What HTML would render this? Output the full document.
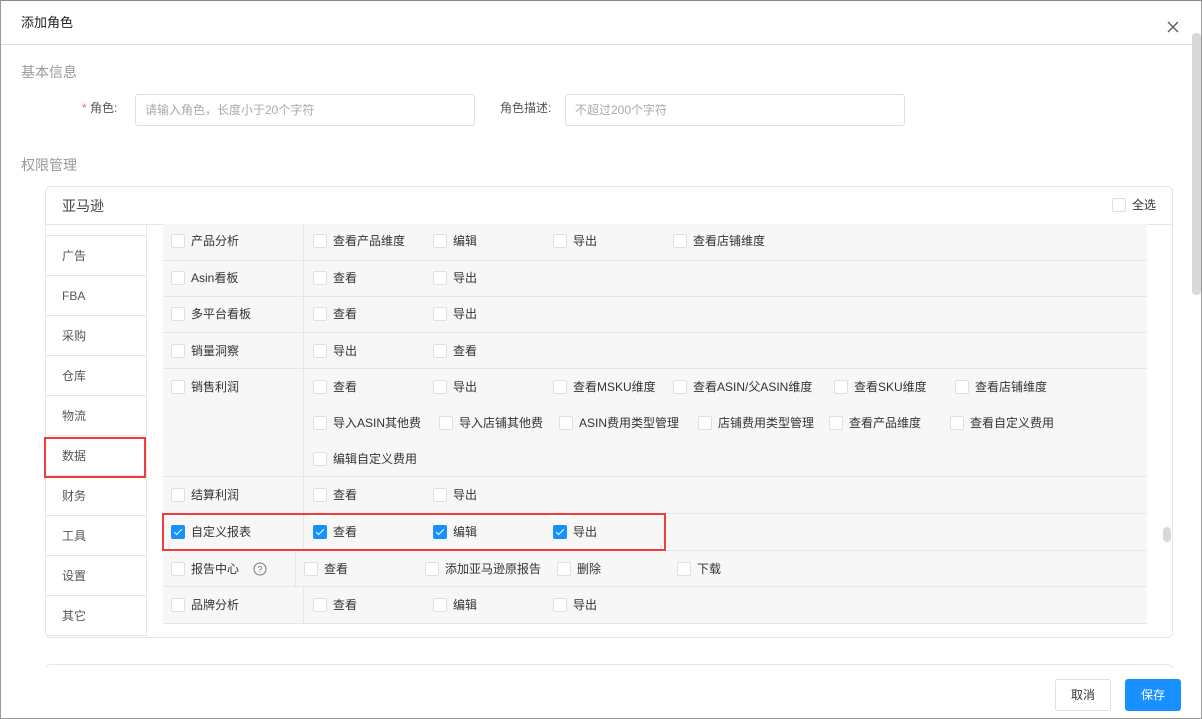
<!DOCTYPE html><html><head><meta charset="utf-8"><style>
*{box-sizing:border-box;margin:0;padding:0}
body{width:1202px;height:719px;overflow:hidden;background:#fff;font-family:"Liberation Sans","Noto Sans CJK SC",sans-serif;position:relative;color:#333}
.a{position:absolute}
.frame{position:absolute;left:0;top:0;width:1202px;height:719px;border:1px solid #9a9a9a;border-top:1px solid #8a8a8a}
.t{position:absolute;font-size:12px;line-height:14px;color:#333;white-space:nowrap}
.c{position:absolute;font-size:12px;line-height:14px;color:#333;white-space:nowrap}
.c i{display:inline-block;width:14px;height:14px;border:1px solid #dcdfe6;background:#fff;border-radius:2px;vertical-align:-3px;margin-right:6px;position:relative}
.c i.on{background:#1890ff;border-color:#1890ff}
.c i.on:after{content:"";position:absolute;left:4px;top:1px;width:3px;height:7px;border:solid #fff;border-width:0 1px 1px 0;transform:rotate(45deg)}
.row{position:absolute;left:163px;width:984px;border-bottom:1px solid #e6e6e6;background:#f7f7f7}
.m{position:absolute;left:46px;width:100px;height:40px;border-bottom:1px solid #e6e6e6;font-size:12px;color:#555;line-height:40px;padding-left:16px}
</style></head><body>
<div class="frame"></div>
<div class="t" style="left:21px;top:16px;font-size:13px;color:#222">添加角色</div>
<svg class="a" style="left:1166px;top:20px" width="14" height="14"><path d="M2 2L12 12M12 2L2 12" stroke="#555" stroke-width="1.3"/></svg>
<div class="a" style="left:1px;top:44px;width:1200px;height:1px;background:#dedede"></div>
<div class="a" style="left:1192px;top:33px;width:9px;height:262px;background:#d9d9d9;border-radius:4px"></div>
<div class="t" style="left:21px;top:64px;font-size:14px;color:#999;line-height:16px">基本信息</div>
<div class="t" style="left:82px;top:101px;color:#555"><span style="color:#f56c6c">*</span> 角色:</div>
<div class="a" style="left:135px;top:94px;width:340px;height:32px;border:1px solid #dcdfe6;border-radius:3px"></div>
<div class="t" style="left:145px;top:103px;color:#aaa">请输入角色，长度小于20个字符</div>
<div class="t" style="left:500px;top:101px;color:#555">角色描述:</div>
<div class="a" style="left:565px;top:94px;width:340px;height:32px;border:1px solid #dcdfe6;border-radius:3px"></div>
<div class="t" style="left:575px;top:103px;color:#aaa">不超过200个字符</div>
<div class="t" style="left:21px;top:157px;font-size:14px;color:#999;line-height:16px">权限管理</div>
<div class="a" style="left:45px;top:186px;width:1128px;height:452px;border:1px solid #e6e6e6;border-radius:6px"></div>
<div class="t" style="left:62px;top:198px;font-size:14px;line-height:16px;color:#444">亚马逊</div>
<div class="c" style="left:1112px;top:198px"><i></i>全选</div>
<div class="a" style="left:46px;top:224px;width:1126px;height:1px;background:#e6e6e6"></div>
<div class="a" style="left:146px;top:225px;width:1px;height:412px;background:#e6e6e6"></div>
<div class="a" style="left:46px;top:235px;width:100px;height:1px;background:#e6e6e6"></div>
<div class="m" style="top:236px">广告</div><div class="m" style="top:276px">FBA</div><div class="m" style="top:316px">采购</div><div class="m" style="top:356px">仓库</div><div class="m" style="top:396px">物流</div><div class="m" style="top:436px">数据</div><div class="m" style="top:476px">财务</div><div class="m" style="top:516px">工具</div><div class="m" style="top:556px">设置</div><div class="m" style="top:596px">其它</div>
<div class="a" style="left:44px;top:437px;width:102px;height:41px;border:2px solid #f03c3c"></div>
<div class="row" style="top:224px;height:37px"></div>
<div class="row" style="top:261px;height:36px"></div>
<div class="row" style="top:297px;height:36px"></div>
<div class="row" style="top:333px;height:36px"></div>
<div class="row" style="top:369px;height:108px"></div>
<div class="row" style="top:477px;height:37px"></div>
<div class="row" style="top:514px;height:37px"></div>
<div class="row" style="top:551px;height:36px"></div>
<div class="row" style="top:587px;height:37px"></div>
<div class="a" style="left:303px;top:224px;width:1px;height:327px;background:#e6e6e6"></div>
<div class="a" style="left:295px;top:551px;width:1px;height:36px;background:#e6e6e6"></div>
<div class="a" style="left:303px;top:587px;width:1px;height:37px;background:#e6e6e6"></div>
<div class="a" style="left:1163px;top:527px;width:8px;height:15px;background:#d9d9d9;border-radius:4px"></div>
<div class="c" style="left:171px;top:234px"><i></i>产品分析</div>
<div class="c" style="left:313px;top:234px"><i></i>查看产品维度</div><div class="c" style="left:433px;top:234px"><i></i>编辑</div><div class="c" style="left:553px;top:234px"><i></i>导出</div><div class="c" style="left:673px;top:234px"><i></i>查看店铺维度</div>
<div class="c" style="left:171px;top:271px"><i></i>Asin看板</div><div class="c" style="left:313px;top:271px"><i></i>查看</div><div class="c" style="left:433px;top:271px"><i></i>导出</div>
<div class="c" style="left:171px;top:307px"><i></i>多平台看板</div><div class="c" style="left:313px;top:307px"><i></i>查看</div><div class="c" style="left:433px;top:307px"><i></i>导出</div>
<div class="c" style="left:171px;top:344px"><i></i>销量洞察</div><div class="c" style="left:313px;top:344px"><i></i>导出</div><div class="c" style="left:433px;top:344px"><i></i>查看</div>
<div class="c" style="left:171px;top:380px"><i></i>销售利润</div>
<div class="c" style="left:313px;top:380px"><i></i>查看</div><div class="c" style="left:433px;top:380px"><i></i>导出</div><div class="c" style="left:553px;top:380px"><i></i>查看MSKU维度</div><div class="c" style="left:673px;top:380px"><i></i>查看ASIN/父ASIN维度</div><div class="c" style="left:834px;top:380px"><i></i>查看SKU维度</div><div class="c" style="left:955px;top:380px"><i></i>查看店铺维度</div>
<div class="c" style="left:313px;top:416px"><i></i>导入ASIN其他费</div><div class="c" style="left:439px;top:416px"><i></i>导入店铺其他费</div><div class="c" style="left:559px;top:416px"><i></i>ASIN费用类型管理</div><div class="c" style="left:698px;top:416px"><i></i>店铺费用类型管理</div><div class="c" style="left:829px;top:416px"><i></i>查看产品维度</div><div class="c" style="left:950px;top:416px"><i></i>查看自定义费用</div>
<div class="c" style="left:313px;top:452px"><i></i>编辑自定义费用</div>
<div class="c" style="left:171px;top:488px"><i></i>结算利润</div><div class="c" style="left:313px;top:488px"><i></i>查看</div><div class="c" style="left:433px;top:488px"><i></i>导出</div>
<div class="c" style="left:171px;top:525px"><i class="on"></i>自定义报表</div><div class="c" style="left:313px;top:525px"><i class="on"></i>查看</div><div class="c" style="left:433px;top:525px"><i class="on"></i>编辑</div><div class="c" style="left:553px;top:525px"><i class="on"></i>导出</div>
<div class="a" style="left:162px;top:513px;width:504px;height:38px;border:2px solid #f03c3c"></div>
<div class="c" style="left:171px;top:562px"><i></i>报告中心</div>
<svg class="a" style="left:253px;top:562px" width="14" height="14"><circle cx="7" cy="7" r="6" fill="none" stroke="#777"/><text x="7" y="10.5" font-size="9" text-anchor="middle" fill="#777" font-family="Liberation Sans">?</text></svg>
<div class="c" style="left:304px;top:562px"><i></i>查看</div><div class="c" style="left:425px;top:562px"><i></i>添加亚马逊原报告</div><div class="c" style="left:557px;top:562px"><i></i>删除</div><div class="c" style="left:677px;top:562px"><i></i>下载</div>
<div class="c" style="left:171px;top:598px"><i></i>品牌分析</div><div class="c" style="left:313px;top:598px"><i></i>查看</div><div class="c" style="left:433px;top:598px"><i></i>编辑</div><div class="c" style="left:553px;top:598px"><i></i>导出</div>
<div class="a" style="left:45px;top:664px;width:1128px;height:20px;border:1px solid #e6e6e6;border-bottom:none;border-radius:6px 6px 0 0"></div>
<div class="a" style="left:0;top:668px;width:1202px;height:51px;background:#fff"></div>
<div class="a" style="left:1055px;top:679px;width:56px;height:32px;border:1px solid #dcdfe6;border-radius:3px;font-size:12px;line-height:30px;text-align:center;color:#333">取消</div>
<div class="a" style="left:1125px;top:679px;width:56px;height:32px;background:#1890ff;border-radius:3px;font-size:12px;line-height:32px;text-align:center;color:#fff">保存</div>
<div class="frame" style="background:none"></div>
</body></html>
